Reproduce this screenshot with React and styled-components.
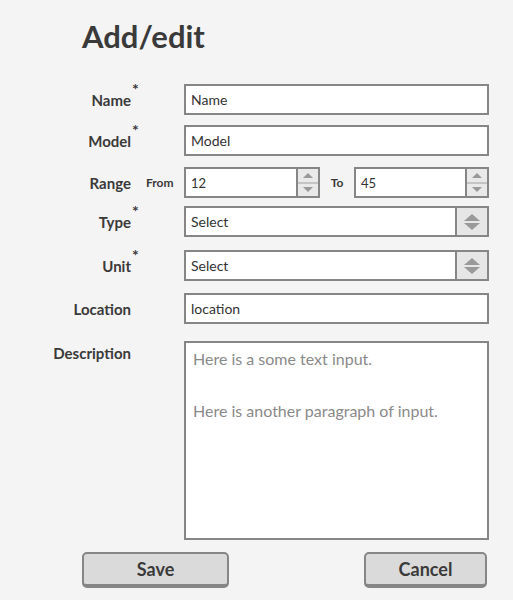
import React from "react";
import styled, { createGlobalStyle } from "styled-components";

const Global = createGlobalStyle`
  html, body { margin: 0; padding: 0; background: #f4f4f4; }
  body { font-family: Lato, "Open Sans", sans-serif; color: #3a3a3a; }
  * { box-sizing: border-box; }
`;

const Page = styled.div`
  width: 513px;
  min-height: 600px;
  padding-top: 18px;
  background: #f4f4f4;
`;

const Title = styled.h1`
  margin: 0 0 0 82px;
  font-size: 31px;
  line-height: 36px;
  font-weight: 700;
  color: #3a3a3a;
`;

const Form = styled.form`
  display: flex;
  flex-direction: column;
  margin-top: ${(p) => p.$mt}px;
`;

const Row = styled.div`
  display: grid;
  grid-template-columns: 131px 53px 305px;
  align-items: ${(p) => (p.$top ? "start" : "center")};
  margin-top: ${(p) => p.$mt || 0}px;
`;

const Label = styled.label`
  position: relative;
  justify-self: end;
  font-size: 15px;
  font-weight: 700;
  line-height: 20px;
  color: #3a3a3a;
  padding-top: ${(p) => p.$pt || 0}px;
`;

const Star = styled.span`
  position: absolute;
  left: 100%;
  margin-left: 1px;
  top: -9px;
  font-size: 16px;
  line-height: 16px;
  font-weight: 700;
  color: #3a3a3a;
`;

const SubLabel = styled.span`
  font-size: 12px;
  font-weight: 700;
  color: #3a3a3a;
  padding-left: ${(p) => p.$pl || 0}px;
`;

const Box = styled.div`
  grid-column: 3;
  height: ${(p) => p.$h || 31}px;
  border: 2px solid #868686;
  background: #fff;
  display: flex;
  align-items: center;
  font-size: 14px;
  color: #333;
  padding-left: 5px;
`;

const RangeGroup = styled.div`
  grid-column: 3;
  display: flex;
  align-items: center;
`;

const NumberBox = styled.div`
  width: ${(p) => p.$w}px;
  height: 31px;
  border: 2px solid #868686;
  background: #fff;
  display: flex;
  align-items: stretch;
`;

const NumberValue = styled.span`
  flex: 1;
  display: flex;
  align-items: center;
  padding-left: 5px;
  font-size: 13px;
  color: #333;
`;

const Spinner = styled.div`
  width: 22px;
  border-left: 2px solid #868686;
  display: flex;
  flex-direction: column;
`;

const SpinHalf = styled.div`
  flex: 1;
  background: #e9e9e9;
  display: flex;
  align-items: center;
  justify-content: center;
  border-top: ${(p) => (p.$lower ? "2px solid #c4c4c4" : "none")};
`;

const Tri = styled.span`
  width: 0;
  height: 0;
  border-left: ${(p) => p.$s}px solid transparent;
  border-right: ${(p) => p.$s}px solid transparent;
  ${(p) =>
    p.$down
      ? `border-top: ${p.$h}px solid #999;`
      : `border-bottom: ${p.$h}px solid #999;`}
`;

const ToLabel = styled.span`
  width: 34px;
  text-align: center;
  font-size: 12px;
  font-weight: 700;
  color: #3a3a3a;
`;

const SelectBox = styled.div`
  grid-column: 3;
  height: 31px;
  border: 2px solid #868686;
  background: #fff;
  display: flex;
  align-items: stretch;
`;

const SelectValue = styled.span`
  flex: 1;
  display: flex;
  align-items: center;
  padding-left: 5px;
  font-size: 14px;
  color: #333;
`;

const SelectArrow = styled.div`
  width: 32px;
  border-left: 2px solid #868686;
  background: #e6e6e6;
  display: flex;
  flex-direction: column;
  align-items: center;
  justify-content: center;
  gap: 2px;
`;

const TextArea = styled.div`
  grid-column: 3;
  height: 199px;
  border: 2px solid #868686;
  background: #fff;
  padding: 5px 7px;
  font-size: 16px;
  line-height: 22px;
  color: #8a8a8a;
`;

const Para = styled.p`
  margin: 0 0 30px;
`;

const Buttons = styled.div`
  display: flex;
  justify-content: space-between;
  width: 405px;
  margin: 12px 0 0 82px;
`;

const Button = styled.button`
  width: ${(p) => p.$w}px;
  height: 36px;
  border: 2px solid #868686;
  border-bottom-width: 4px;
  border-radius: 5px;
  background: #dadada;
  font-family: Lato, "Open Sans", sans-serif;
  font-size: 18px;
  font-weight: 700;
  color: #3a3a3a;
  padding: 0;
`;

const Label2 = ({ children, star, pt }) => (
  <Label $pt={pt}>
    {children}
    {star && <Star>*</Star>}
  </Label>
);

const NumberInput = ({ value, w }) => (
  <NumberBox $w={w}>
    <NumberValue>{value}</NumberValue>
    <Spinner>
      <SpinHalf>
        <Tri $s={5} $h={5} />
      </SpinHalf>
      <SpinHalf $lower>
        <Tri $s={5} $h={5} $down />
      </SpinHalf>
    </Spinner>
  </NumberBox>
);

const Select = ({ value }) => (
  <SelectBox>
    <SelectValue>{value}</SelectValue>
    <SelectArrow>
      <Tri $s={8} $h={7} />
      <Tri $s={8} $h={7} $down />
    </SelectArrow>
  </SelectBox>
);

export default function App() {
  return (
    <Page>
      <Global />
      <Title>Add/edit</Title>
      <Form $mt={30} onSubmit={(e) => e.preventDefault()}>
        <Row>
          <Label2 star>Name</Label2>
          <Box>Name</Box>
        </Row>
        <Row $mt={10}>
          <Label2 star>Model</Label2>
          <Box>Model</Box>
        </Row>
        <Row $mt={11}>
          <Label2>Range</Label2>
          <SubLabel $pl={15}>From</SubLabel>
          <RangeGroup>
            <NumberInput value="12" w={136} />
            <ToLabel>To</ToLabel>
            <NumberInput value="45" w={135} />
          </RangeGroup>
        </Row>
        <Row $mt={8}>
          <Label2 star>Type</Label2>
          <Select value="Select" />
        </Row>
        <Row $mt={13}>
          <Label2 star>Unit</Label2>
          <Select value="Select" />
        </Row>
        <Row $mt={12}>
          <Label2>Location</Label2>
          <Box>location</Box>
        </Row>
        <Row $mt={17} $top>
          <Label2 pt={2}>Description</Label2>
          <TextArea>
            <Para>Here is a some text input.</Para>
            <Para>Here is another paragraph of input.</Para>
          </TextArea>
        </Row>
        <Buttons>
          <Button type="button" $w={147}>Save</Button>
          <Button type="button" $w={123}>Cancel</Button>
        </Buttons>
      </Form>
    </Page>
  );
}
